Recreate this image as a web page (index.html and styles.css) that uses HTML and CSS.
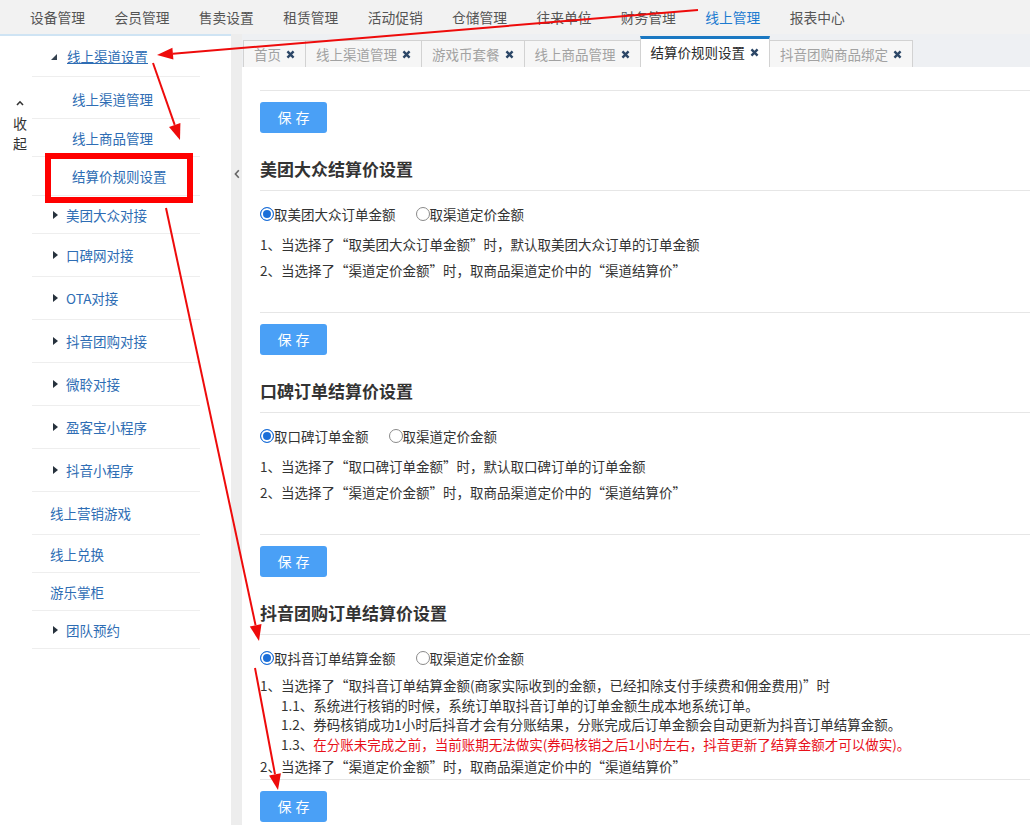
FILE: index.html
```html
<!DOCTYPE html>
<html lang="zh-CN">
<head>
<meta charset="utf-8">
<title>结算价规则设置</title>
<link rel="stylesheet" href="styles.css">
</head>
<body>
<div class="page">
  <nav class="topnav">
    <span class="nav-item">设备管理</span>
    <span class="nav-item">会员管理</span>
    <span class="nav-item">售卖设置</span>
    <span class="nav-item">租赁管理</span>
    <span class="nav-item">活动促销</span>
    <span class="nav-item">仓储管理</span>
    <span class="nav-item">往来单位</span>
    <span class="nav-item">财务管理</span>
    <span class="nav-item active">线上管理</span>
    <span class="nav-item">报表中心</span>
  </nav>

  <div class="main">
    <aside class="sidebar">
      <div class="fold">
        <svg class="fold-caret" width="8" height="6" viewBox="0 0 8 6"><path d="M1 5 L4 1.8 L7 5" fill="none" stroke="#333" stroke-width="1.6"/></svg>
        <span>收</span>
        <span>起</span>
      </div>
      <ul class="menu">
        <li class="row h41 tri-row"><i class="tri-open"></i><a class="link open-link">线上渠道设置</a></li>
        <li class="row h42 sub sub-first"><a class="link">线上渠道管理</a></li>
        <li class="row h38 sub"><a class="link">线上商品管理</a></li>
        <li class="row h39 sub"><a class="link">结算价规则设置</a></li>
        <li class="row h38 tri-row"><i class="tri"></i><a class="link">美团大众对接</a></li>
        <li class="row h43 tri-row"><i class="tri"></i><a class="link">口碑网对接</a></li>
        <li class="row h43 tri-row"><i class="tri"></i><a class="link">OTA对接</a></li>
        <li class="row h43 tri-row"><i class="tri"></i><a class="link">抖音团购对接</a></li>
        <li class="row h43 tri-row"><i class="tri"></i><a class="link">微聆对接</a></li>
        <li class="row h43 tri-row"><i class="tri"></i><a class="link">盈客宝小程序</a></li>
        <li class="row h43 tri-row"><i class="tri"></i><a class="link">抖音小程序</a></li>
        <li class="row h43 plain"><a class="link">线上营销游戏</a></li>
        <li class="row h38 plain"><a class="link">线上兑换</a></li>
        <li class="row h38 plain"><a class="link">游乐掌柜</a></li>
        <li class="row h38 tri-row"><i class="tri"></i><a class="link">团队预约</a></li>
      </ul>
    </aside>

    <div class="handle">
      <svg width="6" height="10" viewBox="0 0 6 10"><path d="M4.8 1.2 L1.4 5 L4.8 8.8" fill="none" stroke="#666" stroke-width="1.6"/></svg>
    </div>

    <section class="workspace">
      <div class="tabs">
        <div class="tab"><span>首页</span><svg class="x" width="9" height="9" viewBox="0 0 10 10"><path d="M1.6 1.6 L8.4 8.4 M8.4 1.6 L1.6 8.4" stroke="#2c4767" stroke-width="2.7"/></svg></div>
        <div class="tab"><span>线上渠道管理</span><svg class="x" width="9" height="9" viewBox="0 0 10 10"><path d="M1.6 1.6 L8.4 8.4 M8.4 1.6 L1.6 8.4" stroke="#2c4767" stroke-width="2.7"/></svg></div>
        <div class="tab"><span>游戏币套餐</span><svg class="x" width="9" height="9" viewBox="0 0 10 10"><path d="M1.6 1.6 L8.4 8.4 M8.4 1.6 L1.6 8.4" stroke="#2c4767" stroke-width="2.7"/></svg></div>
        <div class="tab"><span>线上商品管理</span><svg class="x" width="9" height="9" viewBox="0 0 10 10"><path d="M1.6 1.6 L8.4 8.4 M8.4 1.6 L1.6 8.4" stroke="#2c4767" stroke-width="2.7"/></svg></div>
        <div class="tab active"><span>结算价规则设置</span><svg class="x" width="9" height="9" viewBox="0 0 10 10"><path d="M1.6 1.6 L8.4 8.4 M8.4 1.6 L1.6 8.4" stroke="#2c4767" stroke-width="2.7"/></svg></div>
        <div class="tab"><span>抖音团购商品绑定</span><svg class="x" width="9" height="9" viewBox="0 0 10 10"><path d="M1.6 1.6 L8.4 8.4 M8.4 1.6 L1.6 8.4" stroke="#2c4767" stroke-width="2.7"/></svg></div>
      </div>

      <div class="content">
        <div class="sep"></div>
        <button class="btn">保存</button>
        <h3 class="sec-title">美团大众结算价设置</h3>
        <div class="radios">
          <label class="radio"><span class="dot on"></span>取美团大众订单金额</label>
          <label class="radio"><span class="dot"></span>取渠道定价金额</label>
        </div>
        <div class="notes">
          <p>1、当选择了“取美团大众订单金额”时，默认取美团大众订单的订单金额</p>
          <p>2、当选择了“渠道定价金额”时，取商品渠道定价中的“渠道结算价”</p>
        </div>

        <div class="sep"></div>
        <button class="btn">保存</button>
        <h3 class="sec-title">口碑订单结算价设置</h3>
        <div class="radios">
          <label class="radio"><span class="dot on"></span>取口碑订单金额</label>
          <label class="radio"><span class="dot"></span>取渠道定价金额</label>
        </div>
        <div class="notes">
          <p>1、当选择了“取口碑订单金额”时，默认取口碑订单的订单金额</p>
          <p>2、当选择了“渠道定价金额”时，取商品渠道定价中的“渠道结算价”</p>
        </div>

        <div class="sep"></div>
        <button class="btn">保存</button>
        <h3 class="sec-title">抖音团购订单结算价设置</h3>
        <div class="radios">
          <label class="radio"><span class="dot on"></span>取抖音订单结算金额</label>
          <label class="radio"><span class="dot"></span>取渠道定价金额</label>
        </div>
        <div class="notes dense">
          <p>1、当选择了“取抖音订单结算金额(商家实际收到的金额，已经扣除支付手续费和佣金费用)”时</p>
          <p class="indent">1.1、系统进行核销的时候，系统订单取抖音订单的订单金额生成本地系统订单。</p>
          <p class="indent">1.2、券码核销成功1小时后抖音才会有分账结果，分账完成后订单金额会自动更新为抖音订单结算金额。</p>
          <p class="indent">1.3、<span class="warn">在分账未完成之前，当前账期无法做实(券码核销之后1小时左右，抖音更新了结算金额才可以做实)。</span></p>
          <p class="last">2、当选择了“渠道定价金额”时，取商品渠道定价中的“渠道结算价”</p>
        </div>
        <div class="sep"></div>
        <button class="btn">保存</button>
      </div>
    </section>
  </div>

  <svg class="annotations" width="1030" height="825" viewBox="0 0 1030 825">
    <g stroke="#ee0b0b" stroke-width="2" fill="#ee0b0b">
      <line x1="698" y1="10" x2="172.9" y2="53.7"/>
      <polygon points="157,55 172.4,47.7 173.4,59.6" stroke="none"/>
      <line x1="153" y1="63" x2="174.7" y2="124.9"/>
      <polygon points="180,140 169,126.9 180.4,122.9" stroke="none"/>
      <line x1="166" y1="208" x2="255.6" y2="625.4"/>
      <polygon points="259,641 249.8,626.6 261.5,624.1" stroke="none"/>
      <line x1="255" y1="668" x2="275" y2="774.3"/>
      <polygon points="278,790 269.1,775.4 280.9,773.2" stroke="none"/>
    </g>
    <rect x="48" y="156" width="142" height="44" fill="none" stroke="#ff0000" stroke-width="6"/>
  </svg>
</div>
</body>
</html>
```

FILE: styles.css
```css
* {
  box-sizing: border-box;
  margin: 0;
  padding: 0;
}

html,
body {
  height: 100%;
  overflow: hidden;
}

body {
  font-family: "Noto Sans CJK SC", "Microsoft YaHei", "Noto Sans", sans-serif;
  color: #333;
  background: #fff;
}

.page {
  position: relative;
  width: 1030px;
  height: 825px;
  overflow: hidden;
}

/* ---------- top navigation ---------- */
.topnav {
  height: 34px;
  background: #f2f2f2;
  display: flex;
  align-items: center;
  gap: 29.4px;
  padding-left: 30px;
  font-size: 13.75px;
  color: #555;
}

.nav-item {
  line-height: 33px;
  white-space: nowrap;
}

.nav-item.active {
  color: #1d7bd0;
}

/* ---------- main ---------- */
.main {
  display: flex;
  height: 791px;
}

.sidebar {
  width: 231px;
  flex: none;
  border-top: 2px solid #cfe4f4;
  display: flex;
  background: #fff;
}

.fold {
  width: 32px;
  flex: none;
  display: flex;
  flex-direction: column;
  align-items: center;
  padding: 64px 0 0 8px;
  font-size: 14px;
  line-height: 20px;
  color: #333;
}

.fold-caret {
  display: block;
  margin-bottom: 7px;
}

.menu {
  list-style: none;
  width: 168px;
  flex: none;
  font-size: 13.5px;
}

.row {
  display: flex;
  align-items: center;
  border-bottom: 1px solid #eeeeee;
  white-space: nowrap;
}

.h38 { height: 38px; }
.h39 { height: 39px; }
.h41 { height: 41px; }
.h42 { height: 42px; }
.h43 { height: 43px; }

.link {
  color: #2e6db4;
}

.open-link {
  text-decoration: underline;
}

.tri-row {
  padding-left: 21px;
}

.sub {
  padding-left: 40px;
}

.sub-first {
  padding-top: 3px;
}

.plain {
  padding-left: 18px;
}

.tri {
  display: inline-block;
  width: 0;
  height: 0;
  border-left: 5px solid #26313c;
  border-top: 4px solid transparent;
  border-bottom: 4px solid transparent;
  margin-right: 8px;
}

.tri-open {
  display: inline-block;
  width: 0;
  height: 0;
  border-bottom: 6px solid #34414f;
  border-left: 6px solid transparent;
  margin-right: 10px;
  margin-left: -2px;
  margin-top: 2px;
}

/* ---------- collapse handle ---------- */
.handle {
  width: 11px;
  flex: none;
  background: #ededed;
  display: flex;
  justify-content: center;
  padding-top: 135px;
}

.handle svg {
  display: block;
}

/* ---------- workspace ---------- */
.workspace {
  flex: 1;
  display: flex;
  flex-direction: column;
  min-width: 0;
}

.tabs {
  height: 33px;
  flex: none;
  background: #eef0f3;
  display: flex;
  align-items: flex-end;
  padding-left: 1px;
}

.tab {
  height: 27px;
  display: flex;
  align-items: center;
  gap: 5px;
  padding: 0 10px;
  border: 1px solid #d2d2d2;
  border-bottom: none;
  margin-left: -1px;
  background: #f6f6f6;
  color: #a2a2a2;
  font-size: 13.5px;
  white-space: nowrap;
}

.tab:first-child {
  margin-left: 0;
}

.tab.active {
  height: 31px;
  border-top: 3px solid #1a78c2;
  background: #fff;
  color: #2b2b2b;
  padding-bottom: 2px;
}

.tab .x {
  display: block;
  flex: none;
}

/* ---------- content ---------- */
.content {
  flex: 1;
  background: #fff;
  padding: 23px 0 0 18px;
  font-size: 13.5px;
}

.sep {
  border-top: 1px solid #e6e6e6;
}

.btn {
  display: block;
  width: 67px;
  height: 31px;
  margin-top: 11px;
  border: none;
  border-radius: 3px;
  background: #4aa0f6;
  color: #fff;
  font-family: inherit;
  font-size: 14px;
  letter-spacing: 4px;
  text-indent: 4px;
  line-height: 31px;
}

.sec-title {
  font-size: 17px;
  font-weight: bold;
  line-height: 24px;
  padding: 24px 0 9px;
  border-bottom: 1px solid #e6e6e6;
  color: #333;
}

.radios {
  display: flex;
  align-items: center;
  height: 24px;
  margin-top: 11px;
}

.radio {
  display: flex;
  align-items: center;
  margin-right: 20px;
  white-space: nowrap;
}

.dot {
  width: 14px;
  height: 14px;
  border-radius: 50%;
  border: 1px solid #8a8a8a;
  background: #fff;
  flex: none;
}

.dot.on {
  border-color: #1c6fd8;
  background: #1c6fd8;
  box-shadow: inset 0 0 0 2px #fff;
}

.notes {
  margin-top: 5px;
  line-height: 26px;
  padding-bottom: 29px;
  white-space: nowrap;
}

.notes.dense {
  margin-top: 6px;
  line-height: 19.5px;
  padding-bottom: 1px;
}

.notes.dense .last {
  line-height: 24px;
}

.indent {
  padding-left: 21px;
}

.warn {
  color: #e8101a;
}

/* ---------- annotation overlay ---------- */
.annotations {
  position: absolute;
  left: 0;
  top: 0;
  pointer-events: none;
}
```
